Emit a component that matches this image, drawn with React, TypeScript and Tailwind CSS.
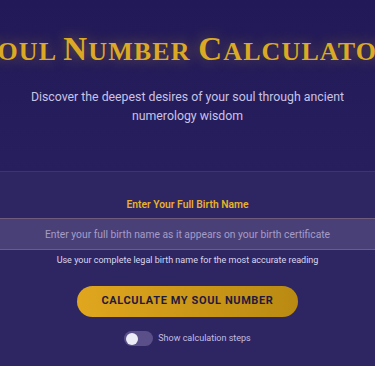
import React from "react";

export default function App() {
  return (
    <div className="min-h-[366px] w-full overflow-hidden bg-gradient-to-b from-[#221a58] via-[#271f5e] to-[#2c2560] font-['Roboto',sans-serif]">
      <div className="flex justify-center pt-[29px]">
        <h1 className="whitespace-nowrap font-['Liberation_Serif',serif] font-bold leading-[40px] tracking-[0.07em] text-[#dba924] [text-shadow:0_0_14px_rgba(219,169,36,0.45)]">
          <span className="text-[33px]">S</span>
          <span className="text-[26px]">OUL </span>
          <span className="text-[33px]">N</span>
          <span className="text-[26px]">UMBER </span>
          <span className="text-[33px]">C</span>
          <span className="text-[26px]">ALCULATOR</span>
        </h1>
      </div>
      <p className="mx-auto mt-[13px] w-[345px] text-center text-[12.3px] leading-[19px] text-[#c9c3e6]">
        Discover the deepest desires of your soul through ancient numerology wisdom
      </p>
      <div className="mx-[-20px] mt-[45px] border-t border-[#3d3474] bg-[#2e2662] px-[8px] pt-[25px] pb-[30px]">
        <div className="text-center text-[10.3px] font-semibold leading-[16px] text-[#e6b22a]">
          Enter Your Full Birth Name
        </div>
        <input
          className="mt-[5px] block h-[32px] w-full border border-[#6f5b7c] bg-[#4a4078] text-center text-[10.3px] text-[#e0dcf0] outline-none placeholder:text-[#a59dc6]"
          placeholder="Enter your full birth name as it appears on your birth certificate"
        />
        <p className="mt-[3px] text-center text-[9px] leading-[14px] text-[#dcd8ee]">
          Use your complete legal birth name for the most accurate reading
        </p>
        <button className="mx-auto mt-[19px] block h-[31px] w-[221px] rounded-full bg-gradient-to-r from-[#e0a61e] to-[#b98a12] text-[11px] font-bold tracking-[0.055em] text-[#1f1a3d]">
          CALCULATE MY SOUL NUMBER
        </button>
        <div className="mt-[14px] flex items-center justify-center gap-[5px]">
          <div className="flex h-[15px] w-[29px] items-center rounded-full bg-[#5a4f89] px-[2px]">
            <div className="h-[12px] w-[12px] rounded-full bg-[#ececf6]" />
          </div>
          <span className="text-[9px] text-[#c4bde0]">Show calculation steps</span>
        </div>
      </div>
    </div>
  );
}
